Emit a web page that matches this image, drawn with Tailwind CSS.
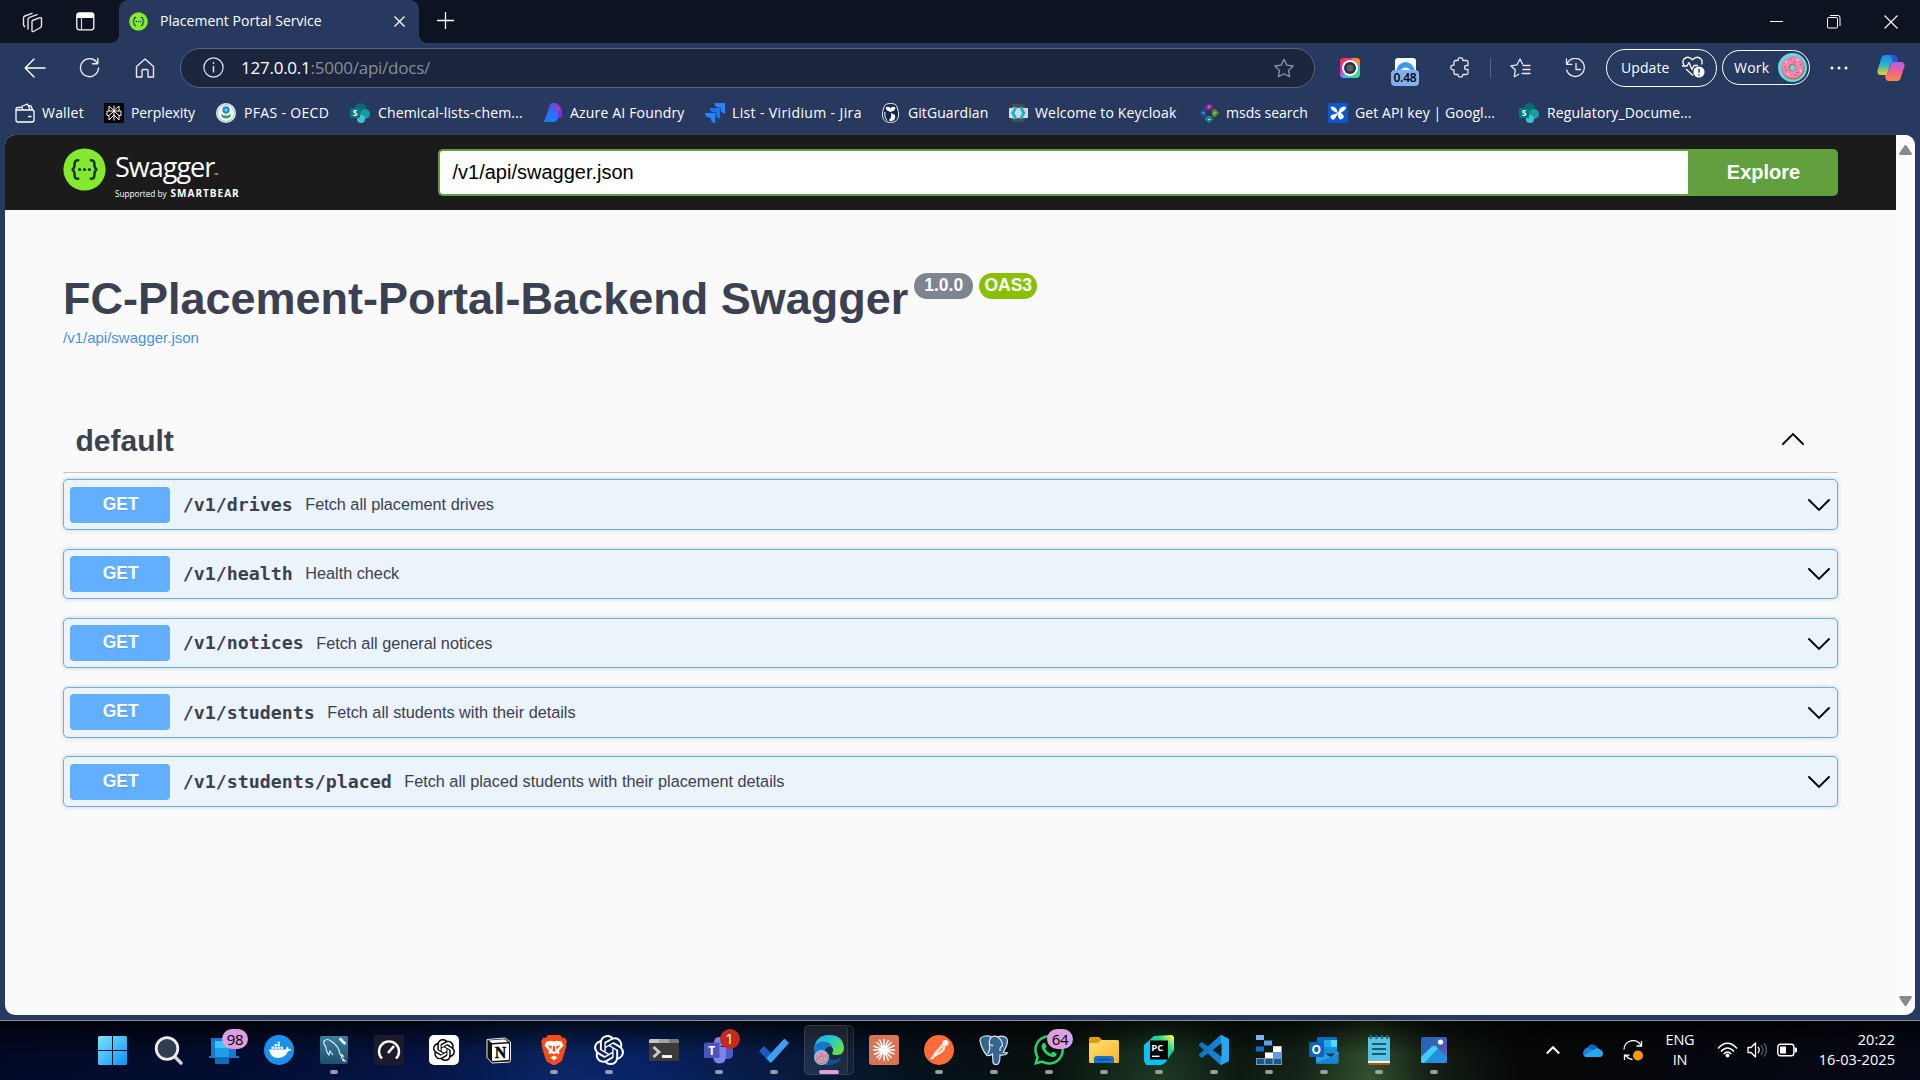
<!DOCTYPE html>
<html lang="en">
<head>
<meta charset="utf-8">
<title>Placement Portal Service</title>
<script src="https://cdn.jsdelivr.net/npm/@tailwindcss/browser@4"></script>
</head>
<body class="w-[1920px] h-[1080px] overflow-hidden bg-[#28395f] flex flex-col font-['Open_Sans',sans-serif] text-white">

<svg class="absolute w-0 h-0">
  <defs>
    <linearGradient id="gWin" x1="0" y1="0" x2="1" y2="1"><stop offset="0" stop-color="#7fe3fb"/><stop offset="1" stop-color="#0a93fb"/></linearGradient>
    <linearGradient id="gCam" x1="0" y1="0" x2="1" y2="1"><stop offset="0" stop-color="#ff2a5a"/><stop offset=".35" stop-color="#f01fd0"/><stop offset=".6" stop-color="#30c0f0"/><stop offset="1" stop-color="#40e060"/></linearGradient>
    <linearGradient id="gCop1" x1="0" y1="0" x2="0" y2="1"><stop offset="0" stop-color="#1a86f0"/><stop offset=".5" stop-color="#27b5c8"/><stop offset="1" stop-color="#f5d020"/></linearGradient>
    <linearGradient id="gCop2" x1="0" y1="0" x2="0" y2="1"><stop offset="0" stop-color="#b25cf0"/><stop offset=".5" stop-color="#f0609a"/><stop offset="1" stop-color="#ff8a3c"/></linearGradient>
    <linearGradient id="gAz" x1="0" y1="0" x2="0" y2="1"><stop offset="0" stop-color="#7a3ff0"/><stop offset=".4" stop-color="#2f6bf5"/><stop offset="1" stop-color="#1580ff"/></linearGradient>
    <linearGradient id="gEdge" x1="0" y1="0" x2="1" y2=".6"><stop offset="0" stop-color="#1aa5e8"/><stop offset=".55" stop-color="#2ccbc8"/><stop offset="1" stop-color="#64e04a"/></linearGradient>
    <linearGradient id="gFold" x1="0" y1="0" x2="1" y2="1"><stop offset="0" stop-color="#ffe07a"/><stop offset="1" stop-color="#f7b520"/></linearGradient>
    <linearGradient id="gPc" x1="0" y1="1" x2="1" y2="0"><stop offset=".45" stop-color="#07c3f2"/><stop offset=".7" stop-color="#21d789"/><stop offset=".95" stop-color="#fcf84a"/></linearGradient>
    <linearGradient id="gPh" x1="0" y1="0" x2="1" y2="1"><stop offset="0" stop-color="#1767c0"/><stop offset=".6" stop-color="#4a5bb8"/><stop offset="1" stop-color="#b04fa8"/></linearGradient>
    <linearGradient id="gVs" x1="0" y1="0" x2="1" y2="0"><stop offset="0" stop-color="#0f72c0"/><stop offset=".72" stop-color="#1784d8"/><stop offset=".74" stop-color="#2ba4f4"/><stop offset="1" stop-color="#2ba4f4"/></linearGradient>
    <linearGradient id="gSql" x1="0" y1="0" x2="0" y2="1"><stop offset="0" stop-color="#3b7f9f"/><stop offset="1" stop-color="#1f4f6d"/></linearGradient>
    <symbol id="openai" viewBox="0 0 24 24"><path d="M22.2819 9.8211a5.9847 5.9847 0 0 0-.5157-4.9108 6.0462 6.0462 0 0 0-6.5098-2.9A6.0651 6.0651 0 0 0 4.9807 4.1818a5.9847 5.9847 0 0 0-3.9977 2.9 6.0462 6.0462 0 0 0 .7427 7.0966 5.98 5.98 0 0 0 .511 4.9107 6.051 6.051 0 0 0 6.5146 2.9001A5.9847 5.9847 0 0 0 13.2599 24a6.0557 6.0557 0 0 0 5.7718-4.2058 5.9894 5.9894 0 0 0 3.9977-2.9001 6.0557 6.0557 0 0 0-.7475-7.0729zm-9.022 12.6081a4.4755 4.4755 0 0 1-2.8764-1.0408l.1419-.0804 4.7783-2.7582a.7948.7948 0 0 0 .3927-.6813v-6.7369l2.02 1.1686a.071.071 0 0 1 .038.052v5.5826a4.504 4.504 0 0 1-4.4945 4.4944zm-9.6607-4.1254a4.4708 4.4708 0 0 1-.5346-3.0137l.142.0852 4.783 2.7582a.7712.7712 0 0 0 .7806 0l5.8428-3.3685v2.3324a.0804.0804 0 0 1-.0332.0615L9.74 19.9502a4.4992 4.4992 0 0 1-6.1408-1.6464zM2.3408 7.8956a4.485 4.485 0 0 1 2.3655-1.9728V11.6a.7664.7664 0 0 0 .3879.6765l5.8144 3.3543-2.0201 1.1685a.0757.0757 0 0 1-.071 0l-4.8303-2.7865A4.504 4.504 0 0 1 2.3408 7.872zm16.5963 3.8558L13.1038 8.364 15.1192 7.2a.0757.0757 0 0 1 .071 0l4.8303 2.7913a4.4944 4.4944 0 0 1-.6765 8.1042v-5.6772a.79.79 0 0 0-.407-.667zm2.0107-3.0231l-.142-.0852-4.7735-2.7818a.7759.7759 0 0 0-.7854 0L9.409 9.2297V6.8974a.0662.0662 0 0 1 .0284-.0615l4.8303-2.7866a4.4992 4.4992 0 0 1 6.6802 4.66zM8.3065 12.863l-2.02-1.1638a.0804.0804 0 0 1-.038-.0567V6.0742a4.4992 4.4992 0 0 1 7.3757-3.4537l-.142.0805L8.704 5.459a.7948.7948 0 0 0-.3927.6813zm1.0976-2.3654l2.602-1.4998 2.6069 1.4998v2.9994l-2.5974 1.4997-2.6067-1.4997Z"/></symbol>
    <symbol id="swag" viewBox="0 0 44 44"><circle cx="22" cy="22" r="21.6" fill="#85ea2d"/><g fill="none" stroke="#173647" stroke-width="2.7" stroke-linecap="round"><path d="M15.5 12.5c-3.2 0-3.6 1-3.6 3.6 0 3.200-.2 5.400-2.900 5.900 2.700.5 2.900 2.700 2.900 5.900 0 2.600.4 3.600 3.600 3.600M28.500 12.500c3.200 0 3.600 1 3.600 3.600 0 3.200.2 5.400 2.900 5.900-2.700.5-2.900 2.700-2.900 5.900 0 2.600-.4 3.600-3.600 3.600"/></g><g fill="#173647"><circle cx="17" cy="22" r="1.6"/><circle cx="22" cy="22" r="1.600"/><circle cx="27" cy="22" r="1.600"/></g></symbol>
    <symbol id="sharepoint" viewBox="0 0 20 20"><circle cx="10.500" cy="6" r="6" fill="#036c70"/><circle cx="15" cy="11" r="5" fill="#1a9ba1"/><circle cx="11" cy="16" r="4" fill="#37c6d0"/><rect x="0" y="5" width="10" height="10" rx="1" fill="#03787c"/><text x="5" y="13" text-anchor="middle" font-family="Open Sans" font-weight="700" font-size="8.500" fill="#fff">S</text></symbol>
    <symbol id="donut" viewBox="0 0 30 30"><circle cx="15" cy="15" r="15" fill="#5fdbe6"/><circle cx="15.500" cy="15.500" r="12" fill="#b5703e"/><path d="M15 3.500c7 0 12 5 11.500 11.500s-4.500 11-11 11.200S4 21 3.800 15 8.500 3.600 15 3.500z" fill="#f585b0"/><g stroke-width="1.200" stroke-linecap="round"><path stroke="#fff2a0" d="M8 9l1 1M20 7l1-.5M23 18l.6 1M10 21l1 1"/><path stroke="#7a6ad8" d="M13 6l1 .6M23 12l1-.5M7 14l.5 1M18 23l1-.500"/><path stroke="#e2446a" d="M17 9l.5 1M8 18l1-.5M20 20l1 .5"/></g><circle cx="15" cy="15" r="4" fill="#b5703e"/><circle cx="15.300" cy="15.300" r="3" fill="#5fdbe6"/></symbol>
    <symbol id="chev" viewBox="0 0 22 13"><path d="M1 1l10 10L21 1" fill="none" stroke="#000" stroke-width="1.900" stroke-linecap="round"/></symbol>
  </defs>
</svg>

<!-- Tab strip -->
<header class="h-[43px] shrink-0 bg-[#0d1320] flex">
  <div class="w-[119px] flex items-start pt-3 pl-[22px]">
    <svg class="w-[21px] h-[21px]" viewBox="0 0 21 21" fill="none" stroke="#e3e5e9" stroke-width="1.400" stroke-linejoin="round" stroke-linecap="round"><path d="M10.500 8.500l7.500-2.800q1.500-.3 1.500 1v7.300q0 1-1 1.500l-7 4q-1.500.5-1.500-1v-8.500q0-1 .5-1.500zM6 17V7.500Q6 6 7.500 5.300L15 2.600M2.800 14.500q-1.300-.5-1.300-2V6q0-1.500 1.300-2l7.200-2.700"/></svg>
    <svg class="w-[19px] h-[19px] ml-[33px]" viewBox="0 0 19 19"><rect x=".8" y=".8" width="17" height="17" rx="2.500" fill="none" stroke="#fff" stroke-width="1.300"/><path d="M1 3q0-2 2-2h13q2 0 2 2v3H1z" fill="#fff"/><path d="M5.500 6v11.500" stroke="#cfd3da" stroke-width="1.200"/></svg>
  </div>
  <div class="w-[300px] relative bg-[#28395f] rounded-t-[9px] flex items-center pb-[1px]">
    <span class="absolute -left-[8px] bottom-0 w-2 h-2 bg-[radial-gradient(circle_at_0_0,#0d1320_7.5px,#28395f_8px)]"></span>
    <span class="absolute -right-[8px] bottom-0 w-2 h-2 bg-[radial-gradient(circle_at_100%_0,#0d1320_7.5px,#28395f_8px)]"></span>
    <svg class="w-[19px] h-[19px] ml-[10px]"><use href="#swag"/></svg>
    <span class="ml-3 -mt-[2px] text-[14px] w-[234px] whitespace-nowrap tracking-[0.020px]">Placement Portal Service</span>
    <svg class="w-[11px] h-[11px]" viewBox="0 0 11 11" stroke="#fff" stroke-width="1.300"><path d="M.5.5l10 10M10.500.5l-10 10"/></svg>
  </div>
  <svg class="w-[17px] h-[17px] ml-[18px] mt-[12px]" viewBox="0 0 17 17" stroke="#fff" stroke-width="1.300"><path d="M8.500 0v17M0 8.500h17"/></svg>
  <div class="ml-auto flex pt-[15px] pr-[22px] gap-[43px]">
    <svg class="w-[14px] h-[14px]" viewBox="0 0 14 14" stroke="#fff"><path d="M0 6.500h13"/></svg>
    <svg class="w-[14px] h-[14px]" viewBox="0 0 14 14" fill="none" stroke="#fff"><rect x=".5" y="2.500" width="10" height="10.500" rx="1"/><path d="M3 .5h8q2 0 2 2v8.500"/></svg>
    <svg class="w-[14px] h-[14px]" viewBox="0 0 14 14" stroke="#fff" stroke-width="1.100"><path d="M.5.5l13 13M13.500.5l-13 13"/></svg>
  </div>
</header>

<!-- Toolbar -->
<nav class="h-[49px] shrink-0 flex items-center pl-6">
  <svg class="w-[22px] h-5" viewBox="0 0 22 20" fill="none" stroke="#fff" stroke-width="1.400" stroke-linecap="round" stroke-linejoin="round"><path d="M21 10H1.500M10 1L1.200 10l8.800 9"/></svg>
  <svg class="w-[21px] h-[21px] ml-[33px]" viewBox="0 0 21 21" fill="none" stroke="#e8eaee" stroke-width="1.400" stroke-linecap="round" stroke-linejoin="round"><path d="M18.500 6.500A9 9 0 1 0 19.500 11M18.800 1.500v5.300h-5.300"/></svg>
  <svg class="w-5 h-5 ml-[35px]" viewBox="0 0 20 20" fill="none" stroke="#e8eaee" stroke-width="1.400" stroke-linejoin="round"><path d="M1.500 8.500L10 1l8.500 7.500V19H13v-6.500q0-1-1-1H8q-1 0-1 1V19H1.500z"/></svg>
  <div class="ml-[25px] w-[1135px] h-10 rounded-full bg-[#1b253d] border border-[#5b6375] flex items-center px-[22px]">
    <svg class="w-[21px] h-[21px]" viewBox="0 0 21 21" fill="none" stroke="#e3e5e9" stroke-width="1.200"><circle cx="10.500" cy="10.500" r="9.600"/><path d="M10.500 9v6.500" stroke-width="1.500"/><circle cx="10.500" cy="6" r=".7" fill="#e3e5e9" stroke-width=".6"/></svg>
    <span class="ml-[17px] text-[17px] tracking-[-0.240px]"><span class="text-white">127.0.0.1</span><span class="text-[#8a8d93]">:5000/api/docs/</span></span>
    <svg class="ml-auto mr-[-3px] w-[22px] h-5" viewBox="0 0 24 23" fill="none" stroke="#8f949e" stroke-width="1.500" stroke-linejoin="round"><path d="M12 1.500l3.200 6.700 7.300 1-5.300 5.100 1.300 7.300L12 18.100l-6.500 3.500 1.300-7.300L1.500 9.200l7.300-1z"/></svg>
  </div>
  <svg class="ml-[25px] w-5 h-5" viewBox="0 0 20 20"><rect width="20" height="20" rx="4" fill="url(#gCam)"/><path d="M0 9V4q0-4 4-4h5z" fill="#ff3a3a" opacity=".5"/><path d="M11 0h5q4 0 4 4v5z" fill="#ff8a2a"/><circle cx="10" cy="10" r="8" fill="#fff"/><circle cx="10" cy="10" r="6" fill="#2a2d33"/><circle cx="10" cy="10" r="3.500" fill="#5a6068"/></svg>
  <div class="relative ml-[35px] w-[21px] h-5">
    <svg class="w-[21px] h-5" viewBox="0 0 21 20"><rect width="21" height="20" rx="3" fill="#fff"/><path d="M1.500 13a9 9 0 0 1 18 0z" fill="#3a9af0"/><path d="M5 13a6 6 0 0 1 11 0z" fill="#e8f3ff"/></svg>
    <span class="absolute -left-1 top-3 w-7 h-4 rounded-[4px] bg-[#7fb0f8] text-black text-[12px] font-semibold leading-4 text-center tracking-[-0.200px]">0.48</span>
  </div>
  <svg class="ml-[34px] w-5 h-[21px]" viewBox="0 0 20 21" fill="none" stroke="#e3e5e9" stroke-width="1.300" stroke-linejoin="round"><path d="M4 5q0-1.500 1.500-1.500H8V3q0-2.300 2.400-2.300T12.800 3v.5h3.700Q18 3.500 18 5v3.500h-1.500q-2 0-2 2t2 2H18V16q0 1.500-1.500 1.500h-3.700v.3q0 2.300-2.400 2.300T8 17.800v-.3H5.500Q4 17.500 4 16v-3.200h-.8Q.8 12.800.8 10.500T3.200 8.200H4z"/></svg>
  <span class="ml-[20px] w-[1px] h-5 bg-[#5a6682]"></span>
  <svg class="ml-[19px] w-[21px] h-5" viewBox="0 0 21 20" fill="none" stroke="#e8eaee" stroke-width="1.300" stroke-linejoin="round" stroke-linecap="round"><path d="M12.500 6L10 1 7 6.800l-6.200 1L5.300 12l-1 6.700 4.500-2.400M13 7.500h7M13 11.500h7M12 15.500h8"/></svg>
  <svg class="ml-[34px] w-[21px] h-5" viewBox="0 0 21 20" fill="none" stroke="#e8eaee" stroke-width="1.300" stroke-linecap="round" stroke-linejoin="round"><path d="M2 6a9 9 0 1 1-.3 6M1.500 1v5.300H7M11 5.500v6h4.500"/></svg>
  <div class="ml-[20px] w-[111px] h-[38px] rounded-full border-[1.500px] border-white flex items-center pl-[14px] pb-px">
    <span class="text-[14px] tracking-[0.080px] w-[60px]">Update</span>
    <svg class="w-6 h-[22px]" viewBox="0 0 24 22" fill="none" stroke="#fff" stroke-width="1.300" stroke-linejoin="round"><path d="M3 9Q.8 5.500 3 3q4-3.800 8.500.8Q16-.8 20 3q2 2.500.5 5.500M1 10h5l2-3.500 3 7 2-4h4M5 13l7 6.500"/><circle cx="18" cy="16" r="5.600" fill="#fff" stroke="none"/><path d="M18 12.800v4M18 18.200v1.200" stroke="#28395f" stroke-width="1.500"/></svg>
  </div>
  <div class="ml-[5px] w-[88px] h-[35px] rounded-full border-[1.500px] border-white flex items-center pl-[11px]">
    <span class="text-[14px] tracking-[0.200px] w-[44px]">Work</span>
    <svg class="w-[29px] h-[29px]"><use href="#donut"/></svg>
  </div>
  <svg class="ml-[20px] w-[18px] h-1" viewBox="0 0 18 4" fill="#fff"><circle cx="2" cy="2" r="1.500"/><circle cx="9" cy="2" r="1.500"/><circle cx="16" cy="2" r="1.500"/></svg>
  <svg class="ml-[29px] w-7 h-[26px]" viewBox="0 0 28 26"><path d="M8 0h8q3 0 4 3l1 4h-5q-2 0-3 3l-2.500 8Q10 20 8 20H4q-4 0-3.500-4.500L4 4Q5 0 8 0z" fill="url(#gCop1)"/><path d="M20 26h-8q-3 0-3.500-3L8 20q2 0 3-3l2.500-7Q14 7 17 7h7q4 0 3.500 4L24 22q-1 4-4 4z" fill="url(#gCop2)"/><path d="M16 0q3 0 4 3l1 4h-5L13.500 0z" fill="#2456d8"/></svg>
</nav>

<!-- Bookmarks -->
<nav class="h-[43px] shrink-0 flex items-center pb-[2px] pl-[15px] text-[14px] whitespace-nowrap">
  <div class="w-[89px] flex items-center gap-[7px]"><svg class="w-5 h-5" viewBox="0 0 20 20" fill="none" stroke="#fff" stroke-width="1.300" stroke-linejoin="round"><path d="M1 7v10q0 2 2 2h14q2 0 2-2V9q0-2-2-2zM1 7.500Q.5 4.500 3 4.500h3M8 7L6.500 3.500 12.500 1l2.500 5.500M13 2.500l3 .5 1.500 3.500M13 13.500h3.500"/></svg><span class="tracking-[0.200px]">Wallet</span></div>
  <div class="w-[112px] flex items-center gap-[7px]"><svg class="w-5 h-5" viewBox="0 0 20 20"><rect width="20" height="20" rx="1.500" fill="#000"/><g fill="none" stroke="#fff" stroke-width="1"><path d="M10 2.500v15M10 7.500L5 3v5M10 7.500L15 3v5M10 8l-5 4.500V17l5-5M10 8l5 4.500V17l-5-5M5 12.500H3V8h14v4.500h-2"/></g></svg><span class="tracking-[-0.080px]">Perplexity</span></div>
  <div class="w-[134px] flex items-center gap-2"><svg class="w-5 h-5" viewBox="0 0 20 20"><circle cx="10" cy="10" r="10" fill="#dfeaf2"/><circle cx="10" cy="10" r="8.300" fill="#fff" stroke="#8fb6d0" stroke-width=".8"/><circle cx="10" cy="7" r="3.700" fill="#1a8fd8"/><path d="M5 11q5 3 10 0 0 4.500-5 4.500T5 11z" fill="#3aa655"/><circle cx="10" cy="7" r="1.500" fill="#7ad0ff"/></svg><span class="tracking-[0.320px]">PFAS - OECD</span></div>
  <div class="w-[194px] flex items-center gap-2"><svg class="w-5 h-5"><use href="#sharepoint"/></svg><span class="tracking-[0.160px]">Chemical-lists-chem...</span></div>
  <div class="w-[161px] flex items-center gap-[7px]"><svg class="w-[19px] h-5" viewBox="0 0 19 20"><path d="M12 4l3-2 3 4v6q0 3-3 3h-3z" fill="#7a2ed8"/><path d="M11 1q3-1 4 2l1 4-5 4z" fill="#e0307a"/><path d="M8 0h3q3 0 3 3v11q0 5-5 5H0L6 2Q6.600 0 8 0z" fill="url(#gAz)"/></svg><span class="tracking-[0.170px]">Azure AI Foundry</span></div>
  <div class="w-[176px] flex items-center gap-[7px]"><svg class="w-5 h-5" viewBox="0 0 20 20" fill="#2684ff"><path d="M20 0H9.500q0 4 4.300 4.500h1.700v1.700q.3 4 4.500 4.300z"/><path d="M15 5H4.800q.2 4 4.300 4.500h1.700v1.700q.2 4 4.200 4.300z" fill="#1f74ea"/><path d="M10.200 10H0q.2 4 4.300 4.500H6v1.700q.2 3.500 4.200 3.800z"/></svg><span class="tracking-[0.370px]">List - Viridium - Jira</span></div>
  <div class="w-[127px] flex items-center gap-[8px]"><svg class="w-[19px] h-5" viewBox="0 0 19 20"><path d="M9.500.5Q15 .5 16 4q2 5 1.500 9-1 6.500-8 6.500t-8-6.500Q1 9 3 4 4 .5 9.500.5z" fill="#14284b" stroke="#e8eaf0"/><path d="M5 4q4-1 4.500 1.500Q10 3 14 4q1 2-1 3.500L9.500 9 6 7.500Q4 6 5 4zM10 10l4 2q1 5-3 6-3 .5-3-1 3-2 2-7z" fill="#fff"/><path d="M4 9q-1 6 2.500 8.500" stroke="#fff" fill="none"/></svg><span class="tracking-[0.080px]">GitGuardian</span></div>
  <div class="w-[191px] flex items-center gap-[7px]"><svg class="w-5 h-5" viewBox="0 0 20 20"><path d="M5 1h10l3 4v10l-3 4H5l-3-4V5z" fill="#4d4d4d"/><path d="M1 5h19v10H1z" fill="#d9d9d9"/><path d="M5.500 4H8.500L5.500 10l3 6h-3L2 10z" fill="#bfe9f2"/><path d="M6.500 4H9.500L6.500 10l3 6h-3L3 10zM11 4h3l3.500 6-3.500 6h-3l3-6z" fill="#00b8e3"/></svg><span class="tracking-[0.170px]">Welcome to Keycloak</span></div>
  <div class="w-[129px] flex items-center gap-[7px]"><svg class="w-5 h-5" viewBox="0 0 20 20"><path d="M10 0l4.500 4L10 8.500 5.500 4z" fill="#8a2f9c"/><path d="M4.500 5.500L9 10l-4.500 4.500L0 10z" fill="#1c4fa0"/><path d="M15.500 5.500L20 10l-4.500 4.500L11 10z" fill="#5f9028"/><path d="M10 11.500l4.500 4.500-4.500 4-4.500-4z" fill="#12907f"/><circle cx="10" cy="10" r="3" fill="#2c3058"/><path d="M9 4.500l2-1.500M3.500 10h2M14.500 10.500l2.500-1M9 16.500h2.500" stroke="#c3c9dd"/></svg><span>msds search</span></div>
  <div class="w-[191px] flex items-center gap-[7px]"><svg class="w-5 h-5" viewBox="0 0 20 20"><rect width="20" height="20" rx="2" fill="#0b57d0"/><path d="M10 10Q3 8 2.500 4q3-1.500 6 2l1.500 4 2-4.500q3-3 6-1.500 0 3-5 5.500l2 2.500q2 2-1 4-3 1.500-4-3l-.5-2-1.500 3q-2 4-4.500 2-2-2 0-4z" fill="#fff"/></svg><span class="tracking-[0.100px]">Get API key | Googl...</span></div>
  <div class="flex items-center gap-2"><svg class="w-5 h-5"><use href="#sharepoint"/></svg><span class="tracking-[0.130px]">Regulatory_Docume...</span></div>
</nav>

<!-- Page -->
<main class="mx-[5px] h-[880px] shrink-0 rounded-[10px] overflow-hidden bg-[#fafafa] flex text-[#3b4151] font-['Liberation_Sans',Arial,sans-serif]">
  <div class="w-[1891px] flex flex-col">
    <div class="h-[75px] bg-[#1b1b1b] flex items-center pl-[58px]">
      <svg class="w-[43px] h-[43px] -mt-[6px]"><use href="#swag"/></svg>
      <div class="ml-[9px] w-[323px] pt-[7px] text-white font-['Open_Sans',sans-serif]">
        <div class="text-[27px] leading-[30px] pt-[3px] tracking-[-1px] whitespace-nowrap">Swagger<span class="text-[5px] tracking-normal">™</span></div>
        <div class="flex items-baseline leading-[12px] -mt-[3px] pb-1 gap-1 whitespace-nowrap"><span class="text-[8.200px]">Supported by</span><span class="text-[10px] font-bold tracking-[1px]">SMARTBEAR</span></div>
      </div>
      <div class="w-[1250px] h-[47px] bg-white border-2 border-r-0 border-[#62a03f] rounded-l-[5px] flex items-center pl-[12.500px] pb-[2px] text-[20px] text-black">/v1/api/swagger.json</div>
      <div class="w-[150px] h-[47px] bg-[#62a03f] rounded-r-[5px] flex items-center justify-center pl-[1px] pb-[2px] text-[20px] font-bold text-white">Explore</div>
    </div>
    <section class="mx-[58px] flex flex-col">
      <div class="mt-[63px] h-[51px] flex items-start">
        <h1 class="text-[45px] leading-[51px] font-bold whitespace-nowrap">FC-Placement-Portal-Backend Swagger</h1>
        <span class="ml-[6px] w-[59px] h-[26px] rounded-full bg-[#7d8492] text-white text-[17.500px] leading-[24px] font-bold text-center">1.0.0</span>
        <span class="ml-[6px] w-[58px] h-[26px] rounded-full bg-[#89bf04] text-white text-[17.500px] leading-[24px] font-bold text-center">OAS3</span>
      </div>
      <a class="mt-[5px] text-[15px] leading-[18px] text-[#4990e2]">/v1/api/swagger.json</a>
      <div class="mt-[61px] h-[65px] pl-[12.500px] pr-[34px] border-b border-[#c0c1c4] flex items-center justify-between">
        <h2 class="text-[30px] leading-[36px] pt-[2px] font-bold">default</h2>
        <svg class="w-[22px] h-[13px] -mt-[3px] rotate-180"><use href="#chev"/></svg>
      </div>
      <div class="mt-[6.400px] flex flex-col gap-[18.750px] text-[16.250px]">
        <div class="h-[50.500px] border border-[#61affe] rounded-[5px] bg-[#ebf3fb] shadow-[0_0_4px_rgba(0,0,0,0.19)] flex items-center px-[6.250px]">
          <span class="w-[100px] h-9 pl-[1px] rounded-[4px] bg-[#61affe] text-white text-[17.500px] leading-[35px] font-bold text-center [text-shadow:0_1px_0_rgba(0,0,0,0.1)]">GET</span>
          <span class="ml-[12.500px] mr-[12.500px] font-['DejaVu_Sans_Mono',monospace] font-bold text-[18.270px]">/v1/drives</span><span>Fetch all placement drives</span>
          <svg class="ml-auto mr-[1px] mt-[2px] w-[22px] h-[13px]"><use href="#chev"/></svg>
        </div>
        <div class="h-[50.500px] border border-[#61affe] rounded-[5px] bg-[#ebf3fb] shadow-[0_0_4px_rgba(0,0,0,0.19)] flex items-center px-[6.250px]">
          <span class="w-[100px] h-9 pl-[1px] rounded-[4px] bg-[#61affe] text-white text-[17.500px] leading-[34px] font-bold text-center [text-shadow:0_1px_0_rgba(0,0,0,0.1)]">GET</span>
          <span class="ml-[12.500px] mr-[12.500px] font-['DejaVu_Sans_Mono',monospace] font-bold text-[18.270px]">/v1/health</span><span class="pb-[1px]">Health check</span>
          <svg class="ml-auto mr-[1px] mt-[2px] w-[22px] h-[13px]"><use href="#chev"/></svg>
        </div>
        <div class="h-[50.500px] border border-[#61affe] rounded-[5px] bg-[#ebf3fb] shadow-[0_0_4px_rgba(0,0,0,0.19)] flex items-center px-[6.250px]">
          <span class="w-[100px] h-9 pl-[1px] rounded-[4px] bg-[#61affe] text-white text-[17.500px] leading-[35px] font-bold text-center [text-shadow:0_1px_0_rgba(0,0,0,0.1)]">GET</span>
          <span class="ml-[12.500px] mr-[12.500px] font-['DejaVu_Sans_Mono',monospace] font-bold text-[18.270px]">/v1/notices</span><span>Fetch all general notices</span>
          <svg class="ml-auto mr-[1px] mt-[2px] w-[22px] h-[13px]"><use href="#chev"/></svg>
        </div>
        <div class="h-[50.500px] border border-[#61affe] rounded-[5px] bg-[#ebf3fb] shadow-[0_0_4px_rgba(0,0,0,0.19)] flex items-center px-[6.250px]">
          <span class="w-[100px] h-9 pl-[1px] rounded-[4px] bg-[#61affe] text-white text-[17.500px] leading-[35px] font-bold text-center [text-shadow:0_1px_0_rgba(0,0,0,0.1)]">GET</span>
          <span class="ml-[12.500px] mr-[12.500px] font-['DejaVu_Sans_Mono',monospace] font-bold text-[18.270px]">/v1/students</span><span>Fetch all students with their details</span>
          <svg class="ml-auto mr-[1px] mt-[2px] w-[22px] h-[13px]"><use href="#chev"/></svg>
        </div>
        <div class="h-[50.500px] border border-[#61affe] rounded-[5px] bg-[#ebf3fb] shadow-[0_0_4px_rgba(0,0,0,0.19)] flex items-center px-[6.250px]">
          <span class="w-[100px] h-9 pl-[1px] rounded-[4px] bg-[#61affe] text-white text-[17.500px] leading-[34px] font-bold text-center [text-shadow:0_1px_0_rgba(0,0,0,0.1)]">GET</span>
          <span class="ml-[12.500px] mr-[12.500px] font-['DejaVu_Sans_Mono',monospace] font-bold text-[18.270px]">/v1/students/placed</span><span>Fetch all placed students with their placement details</span>
          <svg class="ml-auto mr-[1px] mt-[2px] w-[22px] h-[13px]"><use href="#chev"/></svg>
        </div>
      </div>
    </section>
  </div>
  <div class="w-[19px] bg-[#fcfcfc] flex flex-col justify-between items-center pt-[10px] pb-[9px]">
    <svg class="w-[13px] h-[10px]" viewBox="0 0 13 10"><path d="M6.500 0q.6 0 1 .6L12.600 8q.8 2-1 2H1.400q-1.800 0-1-2L5.500.6q.4-.6 1-.6z" fill="#8b8b8b"/></svg>
    <svg class="w-[13px] h-[10px] rotate-180" viewBox="0 0 13 10"><path d="M6.500 0q.6 0 1 .6L12.600 8q.8 2-1 2H1.400q-1.800 0-1-2L5.500.6q.4-.6 1-.6z" fill="#8b8b8b"/></svg>
  </div>
</main>
<div class="h-[5px] shrink-0"></div>

<!-- Taskbar -->
<footer class="h-[60px] shrink-0 relative border-t border-[#8a8c94] flex bg-[linear-gradient(180deg,rgba(0,0,0,0.75)_0,rgba(0,0,0,0.1)_55%,rgba(0,0,0,0)_100%),linear-gradient(90deg,#020a28_0,#030e34_260px,#05164a_440px,#0a2768_560px,#08246a_640px,#071a3c_800px,#06121c_920px,#08120f_1050px,#1c3a24_1160px,#0d1a12_1240px,#142418_1300px,#33532f_1370px,#142016_1430px,#060807_1520px,#04060e_1700px,#060a18_1920px)]">
  <div class="pl-[86.500px] flex text-[15px] text-black">
    <div class="w-[55px] flex flex-col items-center pt-[15px]"><svg class="w-[29px] h-[29px] mr-[3px]" viewBox="0 0 29 29"><path d="M0 1.500Q0 0 1.500 0H14v14H0zM15 0h12.500Q29 0 29 1.500V14H15zM0 15h14v14H1.500Q0 29 0 27.500zM15 15h14v12.500q0 1.500-1.500 1.500H15z" fill="url(#gWin)"/></svg></div>
    <div class="w-[55px] flex flex-col items-center pt-[15px]"><svg class="w-[30px] h-[30px] mr-px" viewBox="0 0 30 30"><path d="M19 19l8 8" stroke="#d6d6d8" stroke-width="3.500" stroke-linecap="round"/><circle cx="13" cy="12.500" r="10.800" fill="#333d52" stroke="#ececee" stroke-width="2.800"/></svg></div>
    <div class="w-[55px] relative flex flex-col items-center pt-[15px]"><svg class="w-[30px] h-[30px]" viewBox="0 0 30 30"><path d="M2 2h25v18h3v2H0v-2h2z" fill="#1679cf"/><path d="M6 6h14v21q0 1-1 1H7q-1 0-1-1z" fill="#0f6cbd"/><path d="M6 5h14v8H6z" fill="#3cc8f4"/><path d="M6 12h14v9H6z" fill="#1f9fe8"/></svg><span class="absolute left-[25.500px] top-2 w-[26px] h-5 rounded-full bg-[#dd9fe2] leading-5 text-center tracking-[-0.400px]">98</span></div>
    <div class="w-[55px] flex flex-col items-center pt-[14px]"><svg class="w-[30px] h-[30px]" viewBox="0 0 30 30"><circle cx="15" cy="15" r="15" fill="#1d8fef"/><path d="M5 14.500h17q.3-2 1.200-3 1.500 1 1.500 2.500 1.500-.3 2.800.3-1 2-3.500 2Q21.500 23 14 23T5 14.500z" fill="#fff"/><path d="M7.500 11.500h2.500V14H7.500zM10.500 11.500H13V14h-2.500zM13.500 11.500H16V14h-2.500zM16.500 11.500H19V14h-2.500zM10.500 9H13v2h-2.500zM13.500 9H16v2h-2.500zM13.500 6.700H16v1.900h-2.500z" fill="#e2effc"/></svg></div>
    <div class="w-[55px] flex flex-col items-center pt-[14px]"><svg class="w-[30px] h-[30px]" viewBox="0 0 30 30"><rect x="1" y="1" width="28" height="28" rx="2" fill="url(#gSql)"/><path d="M5 6q3-3 7 0 8 5 9 13 3 1 4 3M5 6q-1 3 2 6 0 5 3 8l1-4 3 4M22 22l4 4-3-.5M20 17l3 5" fill="none" stroke="#e6eef2" stroke-width="1.100"/><path d="M20.500 3.500l2 1.500 1 1.500 3 2.500" stroke="#fff" stroke-width="2.600"/></svg><i class="mt-[5px] w-2 h-1 rounded-full bg-[#9a9ba8]"></i></div>
    <div class="w-[55px] flex flex-col items-center pt-[14px]"><svg class="w-[30px] h-[30px]" viewBox="0 0 30 30"><rect width="30" height="30" fill="#1c1b2b"/><path d="M8 23.500a10 10 0 1 1 14 0" fill="none" stroke="#fff" stroke-width="2.400"/><path d="M14 18l6-7" stroke="#fff" stroke-width="2.600"/></svg></div>
    <div class="w-[55px] flex flex-col items-center pt-[14px]"><div class="w-[30px] h-[30px] rounded-[5px] bg-white flex items-center justify-center"><svg class="w-[22px] h-[22px] fill-black"><use href="#openai"/></svg></div></div>
    <div class="w-[55px] flex flex-col items-center pt-[16px]"><svg class="w-[26px] h-[27px]" viewBox="0 0 26 27"><path d="M1 2.500L19 1l5.500 4v18.500q0 1.500-1.500 1.600L6 26l-5-5.500z" fill="#111" stroke="#eee" stroke-width="1"/><path d="M6.500 7.500l15.500-1q1 0 1 1V22q0 1-1 1l-15 1q-1 0-1-1V8.500q0-1 .5-1z" fill="#fff"/><path d="M2.500 3.500l16-1.200L22 5 6 6z" fill="#fff"/><text x="14.500" y="21" text-anchor="middle" font-family="Liberation Serif" font-weight="700" font-size="16" fill="#000" stroke="#000" stroke-width=".4">N</text></svg></div>
    <div class="w-[55px] flex flex-col items-center pt-[14px]"><svg class="w-[26px] h-[30px]" viewBox="0 0 26 30"><path d="M7 0h12l2.500 3 2-.5L26 6l-1 3 .5 2-4 13q-.5 2-2 3l-5.500 3h-2l-5.500-3q-1.500-1-2-3l-4-13L1 9 0 6l2.500-3.500 2 .5z" fill="#fb4a1c"/><path d="M13 6.500l3-.8 4.500.8 2 4-4.500 5 .5 2-1 2-2-1.500-1.500 1-1-.5-1 .5L10.500 18l-2 1.500-1-2 .5-2-4.500-5 2-4 4.500-.8zM13 20.500l3.500 2L13 25.500l-3.500-3z" fill="#fff"/><path d="M6.500 10l4.500 1.500-1 3zM19.500 10L15 11.500l1 3zM12.200 11h1.600l.7 5-1.500.8-1.500-.8z" fill="#fb4a1c"/></svg><i class="mt-[5px] w-2 h-1 rounded-full bg-[#9a9ba8]"></i></div>
    <div class="w-[55px] flex flex-col items-center pt-[14px]"><svg class="w-[30px] h-[30px] fill-white"><use href="#openai"/></svg><i class="mt-[5px] w-2 h-1 rounded-full bg-[#9a9ba8]"></i></div>
    <div class="w-[55px] flex flex-col items-center pt-[18px]"><svg class="w-[30px] h-[22px]" viewBox="0 0 30 22"><rect width="30" height="22" rx="1.500" fill="#3b3b3b"/><path d="M0 4V1.500Q0 0 1.500 0H10v4z" fill="#c6c6c6"/><path d="M10 0h10v4H10z" fill="#a3a3a3"/><path d="M20 0h8.500Q30 0 30 1.500V4H20z" fill="#7b7b7b"/><path d="M4.500 8l5.500 5-5.500 5" fill="none" stroke="#ccc" stroke-width="2.800"/><path d="M13 17.500h10" stroke="#fff" stroke-width="2.800"/></svg></div>
    <div class="w-[55px] relative flex flex-col items-center pt-[15px]"><svg class="w-[30px] h-[29px]" viewBox="0 0 30 29"><circle cx="15" cy="6" r="5" fill="#7b83eb"/><circle cx="26" cy="8" r="3.500" fill="#5059c9"/><path d="M20 11h9v8q-1 4-5 4h-4z" fill="#5059c9"/><path d="M9 11h13v9q0 7.500-6.500 7.500T9 20z" fill="#7b83eb"/><rect x="0" y="6.500" width="15.500" height="15.500" rx="1.500" fill="#4b53bc"/><text x="7.800" y="18.700" text-anchor="middle" font-family="Open Sans" font-weight="700" font-size="12" fill="#fff">T</text></svg><span class="absolute left-[28px] top-2 w-5 h-5 rounded-full bg-[#c42b1c] text-white text-[15px] leading-[19px] text-center">1</span><i class="mt-[5px] w-2 h-1 rounded-full bg-[#9a9ba8]"></i></div>
    <div class="w-[55px] flex flex-col items-center pt-[17px]"><svg class="w-[30px] h-[26px]" viewBox="0 0 30 26"><path d="M0 13l5-5 11 11-5 6z" fill="#185abd"/><path d="M7.500 20L24.500 1.500Q25.500.5 26.500 1.500L30 5 12 25z" fill="#3f9ff0"/></svg><i class="mt-[6px] w-2 h-1 rounded-full bg-[#9a9ba8]"></i></div>
    <div class="w-[55px] relative flex flex-col items-center pt-[14px]">
      <div class="absolute left-[2px] top-1 w-[50px] h-[50px] rounded-[5px] bg-white/5 border border-white/10"></div><div class="absolute left-[2px] top-1 w-[44px] h-[50px] rounded-[5px] bg-white/5 border-r border-white/10"></div>
      <svg class="relative w-[30px] h-[30px]" viewBox="0 0 30 30"><path d="M15 0q14 0 15 13 0 6.500-7 7-5 0-5-2 2-2 .5-5Q17 9 11 8 3 8 0 15 1 0 15 0z" fill="url(#gEdge)"/><path d="M0 15q1-8 9-8.500 8 0 9.500 6-5-2-7.500 2-2 5 2.500 9 5 4 14-1Q23 30 14 30 1 29 0 15z" fill="#1677c9"/><path d="M11 14q-2 6 3 10 5 3.500 13.500-1-4.500 7-13 7-5-4-5-9 0-4.500 1.500-7z" fill="#0d4f93"/></svg>
      <svg class="absolute left-[12px] top-[29px] w-[15px] h-[15px]"><use href="#donut"/></svg><i class="relative mt-[5px] w-5 h-1 rounded-full bg-[#dd9fe2]"></i></div>
    <div class="w-[55px] flex flex-col items-center pt-[14px]"><svg class="w-[30px] h-[30px]" viewBox="0 0 30 30"><rect width="30" height="30" rx="3" fill="#d97555"/><path d="M15 4v22M4 15h22M7.500 7l15 16M22.500 7l-15 16M10.500 4.500l9 21M19.500 5l-9.500 20M4.500 11l21 8M5 19.500l20.500-9" stroke="#fff" stroke-width="1.500"/></svg></div>
    <div class="w-[55px] flex flex-col items-center pt-[14px]"><svg class="w-[30px] h-[30px]" viewBox="0 0 30 30"><circle cx="15" cy="15" r="15" fill="#ff6c37"/><circle cx="21.500" cy="8" r="3" fill="#fff"/><path d="M19 9.500l-8 9-1.500 3M20.500 11.500q0 3-4 6l-5.500 3-4 3.500" fill="none" stroke="#fff" stroke-width="1.900"/><path d="M13 17l6-6.500" stroke="#ffd9cb" stroke-width="2.500"/></svg><i class="mt-[5px] w-2 h-1 rounded-full bg-[#9a9b9d]"></i></div>
    <div class="w-[55px] flex flex-col items-center pt-[14px]"><svg class="w-[30px] h-[30px]" viewBox="0 0 30 30"><path d="M6 1q4-.5 6.500 1 3-1.500 6-.3Q24 0 27.500 3q2.500 4-2 12l-1 2.500 4 .2q-1.500 2.500-6 2.500-1 0-1.500-.2Q21 29 18 29.500t-4-2L13.500 19q-2 2-5.500 1.500Q3 15 1 6q-.5-4 5-5z" fill="#336791" stroke="#dfe6ec" stroke-width="1.200"/><path d="M12.500 2q-3 3-2 8t-2 9M18.500 2q5 3 5 9-3 1-2.500 5M14 11q-2-2-4-.5" fill="none" stroke="#dfe6ec" stroke-width="1.200"/></svg><i class="mt-[5px] w-2 h-1 rounded-full bg-[#9a9b9d]"></i></div>
    <div class="w-[55px] relative flex flex-col items-center pt-[14px]"><svg class="w-[30px] h-[30px]" viewBox="0 0 24 24" fill="#25d366"><path d="M17.472 14.382c-.297-.149-1.758-.867-2.030-.967-.273-.099-.471-.148-.670.150-.197.297-.767.966-.940 1.164-.173.199-.347.223-.644.075-.297-.150-1.255-.463-2.390-1.475-.883-.788-1.480-1.761-1.653-2.059-.173-.297-.018-.458.130-.606.134-.133.298-.347.446-.520.149-.174.198-.298.298-.497.099-.198.050-.371-.025-.520-.075-.149-.669-1.612-.916-2.207-.242-.579-.487-.500-.669-.510-.173-.008-.371-.010-.570-.010-.198 0-.520.074-.792.372-.272.297-1.040 1.016-1.040 2.479 0 1.462 1.065 2.875 1.213 3.074.149.198 2.096 3.200 5.077 4.487.709.306 1.262.489 1.694.625.712.227 1.360.195 1.871.118.571-.085 1.758-.719 2.006-1.413.248-.694.248-1.289.173-1.413-.074-.124-.272-.198-.570-.347m-5.421 7.403h-.004a9.870 9.870 0 01-5.031-1.378l-.361-.214-3.741.982.998-3.648-.235-.374a9.860 9.860 0 01-1.510-5.260c.001-5.450 4.436-9.884 9.888-9.884 2.640 0 5.122 1.030 6.988 2.898a9.825 9.825 0 012.893 6.994c-.003 5.450-4.437 9.884-9.885 9.884m8.413-18.297A11.815 11.815 0 0012.050 0C5.495 0 .160 5.335.157 11.892c0 2.096.547 4.142 1.588 5.945L.057 24l6.305-1.654a11.882 11.882 0 005.683 1.448h.005c6.554 0 11.890-5.335 11.893-11.893a11.821 11.821 0 00-3.480-8.413Z"/></svg><span class="absolute left-[25.500px] top-2 w-[26px] h-5 rounded-full bg-[#dd9fe2] leading-5 text-center tracking-[-0.400px]">64</span><i class="mt-[5px] w-2 h-1 rounded-full bg-[#9a9b9d]"></i></div>
    <div class="w-[55px] flex flex-col items-center pt-[16px]"><svg class="w-[30px] h-[27px]" viewBox="0 0 30 27"><path d="M0 8V1.500Q0 0 1.500 0H10l3 3-3 5z" fill="#e09b08"/><path d="M0 6h9l3-3h16.500Q30 3 30 4.500v20q0 1.500-1.500 1.500h-27Q0 26 0 24.500z" fill="url(#gFold)"/><path d="M5 26v-4q0-3 3-3h14q3 0 3 3v4z" fill="#1272cc"/><path d="M9 22.500h12" stroke="#0a4a90" stroke-width="1.200"/></svg><i class="mt-[6px] w-2 h-1 rounded-full bg-[#9a9b9d]"></i></div>
    <div class="w-[55px] flex flex-col items-center pt-[14px]"><svg class="w-[30px] h-[30px]" viewBox="0 0 30 30"><path d="M0 10L10 1l18-1 2 2v13L21 28l-4 2H2l-2-4z" fill="url(#gPc)"/><rect x="6" y="5.500" width="18" height="19" fill="#000"/><text x="7.200" y="15.500" font-family="Open Sans" font-weight="700" font-size="9.500" fill="#fff">PC</text><path d="M8 21.300h7.500" stroke="#fff" stroke-width="1.400"/></svg><i class="mt-[5px] w-2 h-1 rounded-full bg-[#9a9b9d]"></i></div>
    <div class="w-[55px] flex flex-col items-center pt-[14px]"><svg class="w-[30px] h-[30px]" viewBox="0 0 24 24" fill="url(#gVs)"><path d="M23.150 2.587L18.210.210a1.494 1.494 0 0 0-1.705.290l-9.460 8.630-4.120-3.128a.999.999 0 0 0-1.276.057L.327 7.261A1 1 0 0 0 .326 8.740L3.899 12 .326 15.260a1 1 0 0 0 .001 1.479L1.650 17.940a.999.999 0 0 0 1.276.057l4.120-3.128 9.460 8.630a1.492 1.492 0 0 0 1.704.290l4.942-2.377A1.500 1.500 0 0 0 24 20.060V3.939a1.500 1.500 0 0 0-.850-1.352zm-5.146 14.861L10.826 12l7.178-5.448v10.896z"/></svg><i class="mt-[5px] w-2 h-1 rounded-full bg-[#9a9b9d]"></i></div>
    <div class="w-[55px] flex flex-col items-center pt-[14px]"><svg class="w-[26px] h-[30px]" viewBox="0 0 26 30"><path d="M9 17h8v-6h9v19H0v-7h9z" fill="#8f9296"/><path d="M0 0h8v5H0z" fill="#7fb0f5"/><path d="M8 5.500h8v5H8z" fill="#5b9bea"/><path d="M0 11.500h8v5H0z" fill="#0f6fd0"/><path d="M17 11.500h8v5.500h-8zM9 18h8v5H9z" fill="#fff"/><path d="M17 18h8v5h-8z" fill="#5b9bea"/><path d="M1 24h7v5H1zM9.500 24h7v5h-7zM18 24h7v5h-7z" fill="#0b5aa0"/></svg><i class="mt-[5px] w-2 h-1 rounded-full bg-[#9a9b9d]"></i></div>
    <div class="w-[55px] flex flex-col items-center pt-[15px]"><svg class="w-[30px] h-[28px]" viewBox="0 0 30 28"><path d="M8 2q0-1 1-1h18q1 0 1 1v16H8z" fill="#0f6cbd"/><path d="M15 4h7v7h-7z" fill="#28a8ea"/><path d="M22 4h6v7h-6z" fill="#50d9ff"/><path d="M15 11h13v6H15z" fill="#1490df"/><path d="M7 17h8l7 4 7.500-6v11q0 1.500-1.500 1.500H8.500Q7 27.500 7 26z" fill="#2ba0e8"/><path d="M7 27l22-9v8.500q0 1-1 1H8z" fill="#1784d8"/><rect y="6" width="15" height="15" rx="1.500" fill="#0a63b8"/><text x="7.400" y="18" text-anchor="middle" font-family="Open Sans" font-weight="700" font-size="12" fill="#fff">O</text></svg><i class="mt-[6px] w-2 h-1 rounded-full bg-[#9a9b9d]"></i></div>
    <div class="w-[55px] flex flex-col items-center pt-[14px]"><svg class="w-[24px] h-[30px]" viewBox="0 0 24 30"><path d="M1 26h22v3q0 1-1 1H2q-1 0-1-1z" fill="#b5520f"/><path d="M1 3q0-1 1-1h20q1 0 1 1v24H1z" fill="#5cc3dc"/><path d="M1 26h22v2H1z" fill="#f3f3f3"/><path d="M5 9h14M5 14h14M5 19h14" stroke="#0f5f78" stroke-width="1.800"/><path d="M4 0v4M9.500 0v4M15 0v4M20.500 0v4" stroke="#0f6f8a" stroke-width="2.200"/></svg><i class="mt-[5px] w-2 h-1 rounded-full bg-[#9aa39a]"></i></div>
    <div class="w-[55px] flex flex-col items-center pt-[16px]"><svg class="w-[26px] h-[26px]" viewBox="0 0 26 26"><rect width="26" height="26" rx="2" fill="url(#gPh)"/><path d="M0 20L11 9.500q2-1.500 4 0L26 20v4q0 2-2 2H2q-2 0-2-2z" fill="#2090e0"/><path d="M0 20L11 9.500q2-1.500 4 0l2 2L3 26H2q-2 0-2-2z" fill="#3fd0f4"/><circle cx="19.500" cy="5" r="2.600" fill="#fff"/></svg><i class="mt-[7px] w-2 h-1 rounded-full bg-[#9a9b9d]"></i></div>
  </div>
  <div class="ml-auto pr-[25px] pb-[1px] flex items-center">
    <svg class="w-[14px] h-2" viewBox="0 0 14 8" fill="none" stroke="#fff" stroke-width="2"><path d="M.8 7.500L7 1.200l6.200 6.300"/></svg>
    <svg class="ml-[23px] w-5 h-[13px]" viewBox="0 0 20 13"><path d="M4 4Q7-1.500 12 1q2 1 3 3.500L9 9z" fill="#0a63b8"/><path d="M1 6q2-3 5.500-2L13 7.500 8 13H4Q0 13 0 9.500 0 7.500 1 6z" fill="#1784d8"/><path d="M12 5q3-1.500 5 .5 3 1 3 4T17 13H4q-2 0-3-1.500z" fill="#28a8ea"/></svg>
    <svg class="ml-5 w-[21px] h-[21px]" viewBox="0 0 21 21" fill="none" stroke="#fff" stroke-width="1.300"><path d="M1 9.500a9 9 0 0 1 17-4M18.500 1v5h-5M9.500 19.500q-4-.5-7-4M1.500 20v-4.800h5"/><circle cx="15" cy="15.500" r="5" fill="#ff9a0c" stroke="none"/></svg>
    <div class="ml-[16px] w-[40px] text-center text-[14.500px] leading-5 tracking-[-0.200px]">ENG<br>IN</div>
    <svg class="ml-[17px] w-[21px] h-[16px]" viewBox="0 0 21 16" fill="none" stroke="#fff" stroke-width="1.500"><path d="M1 6.500q9.500-10.500 19 0M4 9.500q6.500-7 13 0M6.800 12q3.700-4 7.400 0"/><circle cx="10.500" cy="13.500" r="1.900" fill="#fff" stroke="none"/></svg>
    <svg class="ml-[9px] w-5 h-[16px]" viewBox="0 0 20 16" fill="none" stroke="#fff" stroke-width="1.300" stroke-linejoin="round"><path d="M1 5.500h3L8.500 1v14L4 10.500H1zM11 5q2.500 3 0 6"/><path d="M14 3q4 5 0 10M17 1.500q5 6.500 0 13" stroke="#55575f"/></svg>
    <svg class="ml-[10px] w-5 h-[14px]" viewBox="0 0 20 14"><rect x=".8" y="1.300" width="16" height="11.400" rx="2.500" fill="none" stroke="#fff" stroke-width="1.400"/><rect x="3" y="3.500" width="6" height="7" fill="#fff"/><path d="M17.500 4.500h1.200q1.300 0 1.300 1.300v2.400q0 1.300-1.300 1.300h-1.200z" fill="#fff"/></svg>
    <div class="ml-[20px] w-[78px] text-right text-[14.500px] leading-5 tracking-[0.060px] whitespace-nowrap">20:22<br>16-03-2025</div>
  </div>
</footer>
</body>
</html>
